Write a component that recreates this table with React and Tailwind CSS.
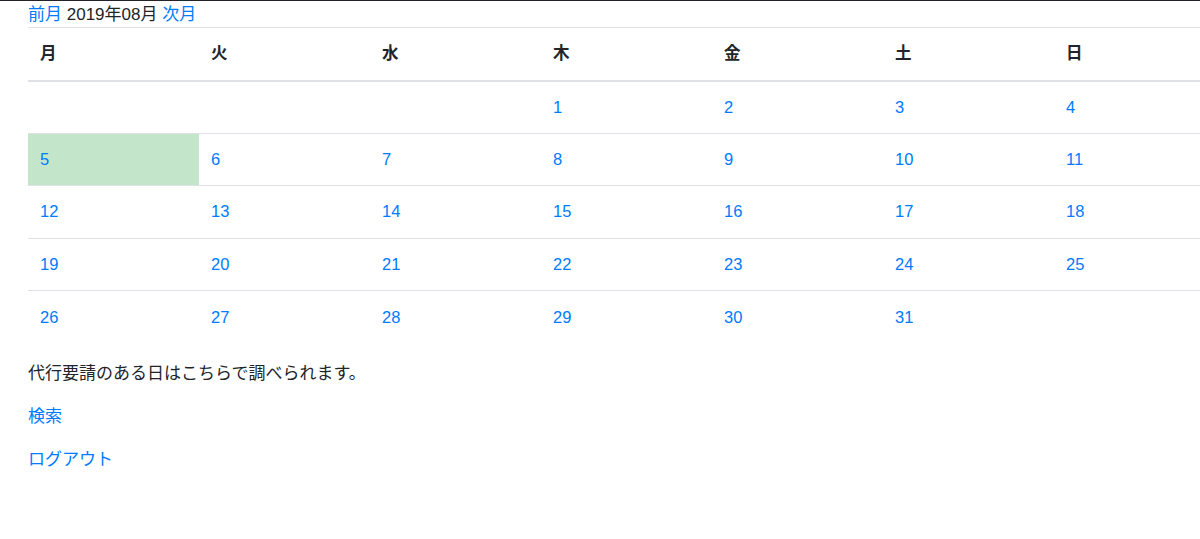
import React from "react";

const weeks = [
  [null, null, null, 1, 2, 3, 4],
  [5, 6, 7, 8, 9, 10, 11],
  [12, 13, 14, 15, 16, 17, 18],
  [19, 20, 21, 22, 23, 24, 25],
  [26, 27, 28, 29, 30, 31, null],
];
const days = ["月", "火", "水", "木", "金", "土", "日"];

export default function App() {
  return (
    <div
      className="w-[1200px] h-[539px] overflow-hidden bg-white border-t border-[#212529] text-[#212529] text-[16.5px]"
      style={{ fontFamily: '"Liberation Sans", "Noto Sans CJK JP", sans-serif' }}
    >
      <div className="pl-[28px]">
        <div className="h-[26px] leading-[27px] whitespace-nowrap text-[17px]">
          <a className="text-[#007bff]">前月</a> 2019年08月{" "}
          <a className="text-[#007bff]">次月</a>
        </div>
        <table className="w-[1197px] border-collapse table-fixed">
          <thead>
            <tr>
              {days.map((d) => (
                <th
                  key={d}
                  className="text-left font-bold h-[53px] pl-3 border-t border-b-2 border-[#dee2e6] align-middle"
                >
                  {d}
                </th>
              ))}
            </tr>
          </thead>
          <tbody>
            {weeks.map((w, i) => (
              <tr key={i}>
                {w.map((n, j) => (
                  <td
                    key={j}
                    className={`h-[52.5px] pl-3 align-middle border-t border-[#dee2e6] ${
                      n === 5 ? "bg-[#c3e6cb]" : ""
                    }`}
                  >
                    {n !== null && <a className="text-[#007bff]">{n}</a>}
                  </td>
                ))}
              </tr>
            ))}
          </tbody>
        </table>
        <p className="mt-[17px] leading-[27px] text-[17px]">代行要請のある日はこちらで調べられます。</p>
        <p className="mt-[16px] leading-[27px] text-[17px]">
          <a className="text-[#007bff]">検索</a>
        </p>
        <p className="mt-[16px] leading-[27px] text-[17px]">
          <a className="text-[#007bff]">ログアウト</a>
        </p>
      </div>
    </div>
  );
}
